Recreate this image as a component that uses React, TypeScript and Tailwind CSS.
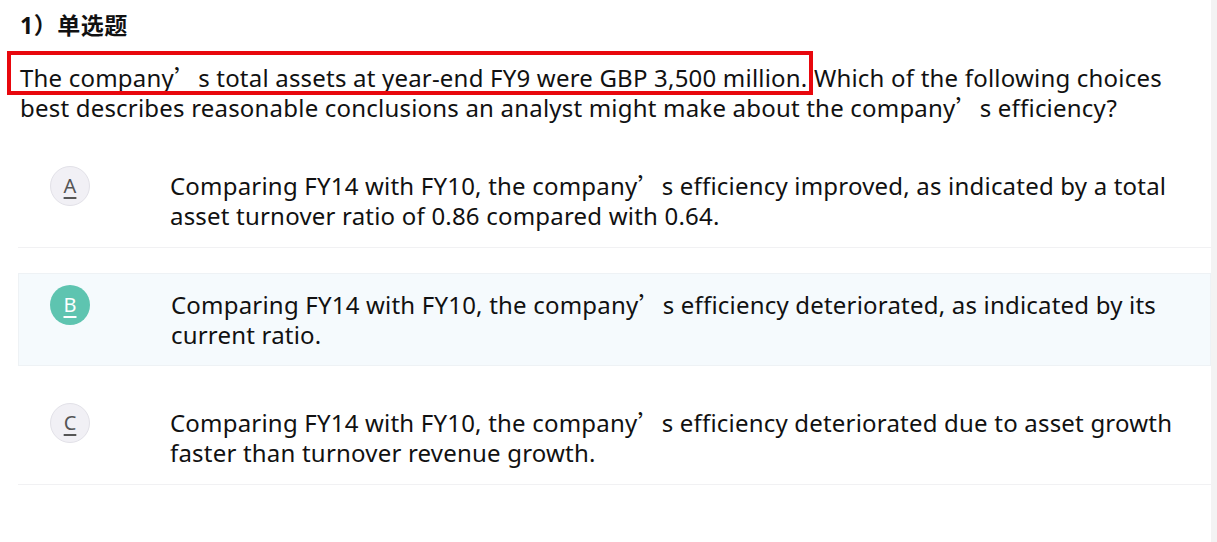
const Q = () => (
  <span className="leading-[0px]" style={{ fontFamily: '"Noto Sans CJK SC", sans-serif' }}>
    ’
  </span>
);

const options = [
  {
    key: "A",
    text: (
      <>
        Comparing FY14 with FY10, the company<Q />s efficiency improved, as indicated by a total asset turnover ratio of
        0.86 compared with 0.64.
      </>
    ),
    selected: false,
  },
  {
    key: "B",
    text: (
      <>
        Comparing FY14 with FY10, the company<Q />s efficiency deteriorated, as indicated by its current ratio.
      </>
    ),
    selected: true,
  },
  {
    key: "C",
    text: (
      <>
        Comparing FY14 with FY10, the company<Q />s efficiency deteriorated due to asset growth faster than turnover
        revenue growth.
      </>
    ),
    selected: false,
  },
];

export default function App() {
  return (
    <div
      className="flex h-[542px] w-full bg-white text-[#111]"
      style={{ fontFamily: '"Noto Sans", "Noto Sans CJK SC", sans-serif' }}
    >
      <div className="flex-1 overflow-hidden">
        <h2 className="mt-[10px] pl-[20px] text-[23px] font-bold leading-[30px] tracking-[0.5px]">1）单选题</h2>
        <p className="mt-[23px] pl-[20px] pr-[30px] text-[24px] leading-[30px] tracking-[0.2px]">
          <span className="relative">
            The company<Q />s total assets at year-end FY9 were GBP 3,500 million.
            <span className="absolute -top-[10px] -bottom-[1px] -left-[13px] -right-[6px] border-4 border-[#e8070d]" />
          </span>{" "}
          Which of the following choices best describes reasonable conclusions an analyst might make about the company<Q />s
          efficiency?
        </p>

        <ul className="mt-[31px] ml-[18px] flex flex-col gap-[25px]">
          {options.map((opt) => (
            <li
              key={opt.key}
              className={`flex items-start ${
                opt.selected
                  ? "border border-[#eef2f5] bg-[#f5fafd] pt-[16px] pb-[15px]"
                  : "border-b border-[#f1f1f3] pt-[17px] pb-[16px]"
              }`}
            >
              <div className={`w-[152px] shrink-0 ${opt.selected ? "pl-[31px]" : "pl-[32px]"}`}>
                <span
                  className={`-mt-[5px] flex h-[40px] w-[40px] items-center justify-center rounded-full text-[20px] underline decoration-[1.5px] underline-offset-[4px] ${
                    opt.selected
                      ? "bg-[#5ec4b0] text-white"
                      : "border border-[#e2e1e8] bg-[#f1f0f5] text-[#555]"
                  }`}
                >
                  {opt.key}
                </span>
              </div>
              <p className="pr-[30px] text-[24px] leading-[30px] tracking-[0.2px]">{opt.text}</p>
            </li>
          ))}
        </ul>
      </div>
      <div className="w-[6px] shrink-0 bg-[#f3f3f3]" />
    </div>
  );
}
